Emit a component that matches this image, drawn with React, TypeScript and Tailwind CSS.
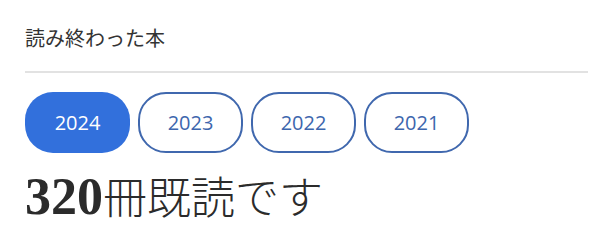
import { useState } from "react";

const anos = ["2024", "2023", "2022", "2021"];

export default function App() {
  const [anoAtivo, setAnoAtivo] = useState("2024");

  return (
    <div className="h-[234px] w-[598px] overflow-hidden bg-white px-[25px] pt-[24px] font-['Noto_Sans_CJK_JP',sans-serif] text-[#333]">
      <h2 className="text-[20px] leading-[28px] font-normal">読み終わった本</h2>
      <div className="mt-[19px] mr-[-15px] h-[2px] bg-[#e2e2e2]" />

      <div className="mt-[19px] flex gap-[8px]">
        {anos.map((ano) => {
          const ativo = ano === anoAtivo;
          return (
            <button
              key={ano}
              type="button"
              onClick={() => setAnoAtivo(ano)}
              className={
                ativo
                  ? "flex h-[61px] w-[105px] items-center justify-center rounded-[28px] bg-[#3270dc] font-['Open_Sans',sans-serif] text-[20px] text-white"
                  : "flex h-[61px] w-[105px] items-center justify-center rounded-[28px] border-2 border-[#4068ae] bg-white font-['Open_Sans',sans-serif] text-[20px] text-[#3d66ad]"
              }
            >
              {ano}
            </button>
          );
        })}
      </div>

      <p className="mt-[14px] leading-[56px] whitespace-nowrap text-[#2b2b2b]">
        <span className="font-['Liberation_Serif',serif] text-[52px] font-bold">320</span>
        <span className="font-['Noto_Sans_CJK_JP',sans-serif] text-[44px] font-light">冊既読です</span>
      </p>
    </div>
  );
}
